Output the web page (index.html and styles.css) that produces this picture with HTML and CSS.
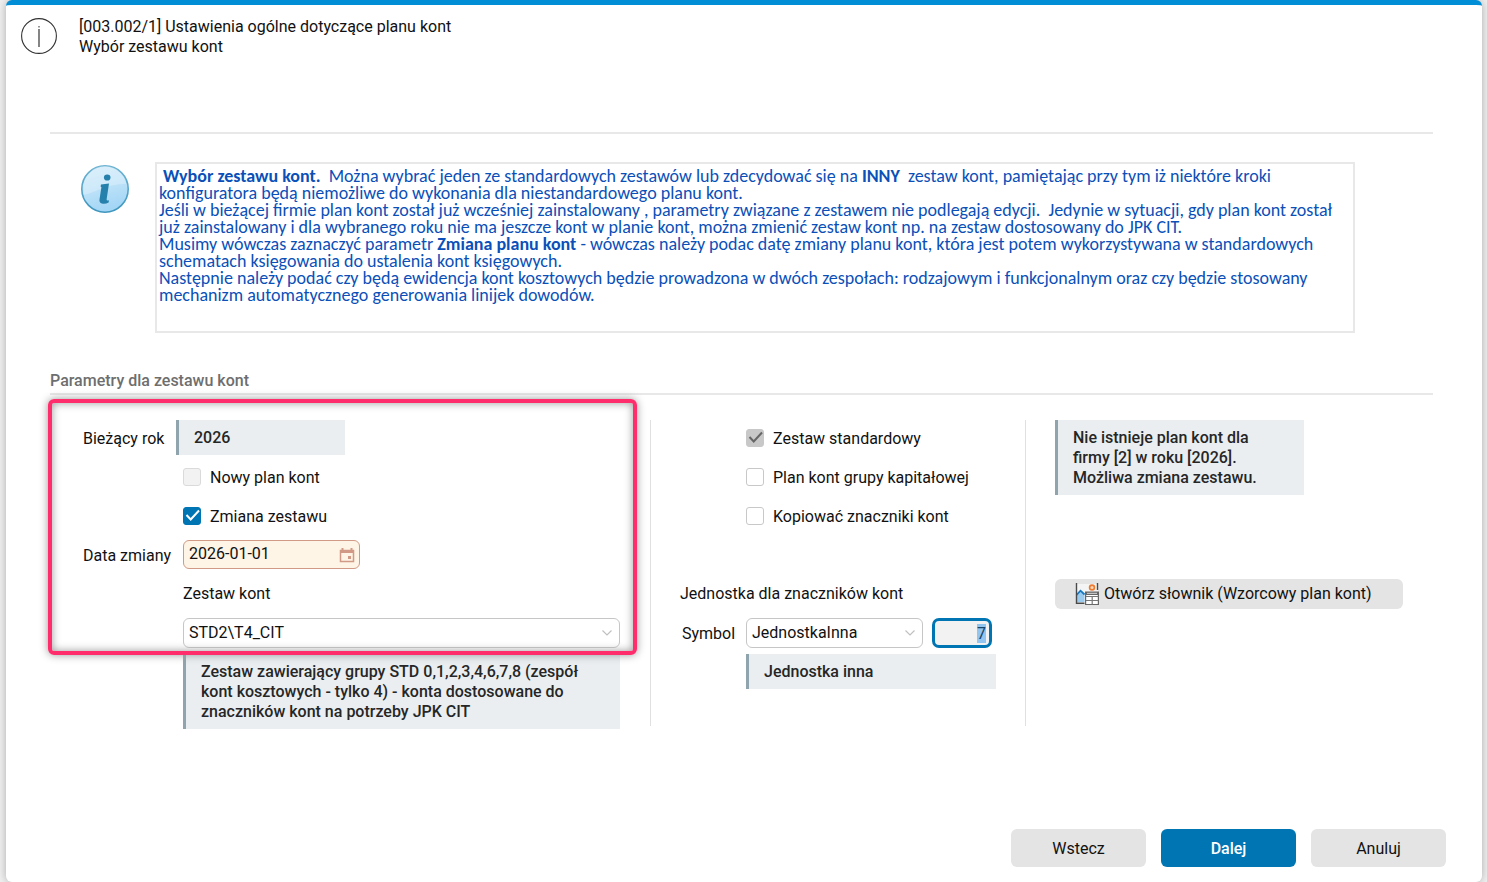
FILE: index.html
```html
<!DOCTYPE html>
<html lang="pl">
<head>
<meta charset="utf-8">
<meta name="viewport" content="width=device-width, initial-scale=1">
<title>Ustawienia ogólne dotyczące planu kont</title>
<link rel="stylesheet" href="styles.css">
</head>
<body>
<form class="dialog">
  <header class="header">
    <svg class="header-icon" viewBox="0 0 36 36" aria-hidden="true">
      <circle cx="18" cy="18" r="17.4" fill="none" stroke="#333" stroke-width="1.1"/>
      <path d="M18 11v18" stroke="#666" stroke-width="1.6"/>
      <path d="M18 8v1.6" stroke="#888" stroke-width="1.8"/>
    </svg>
    <h1 class="title">[003.002/1] Ustawienia ogólne dotyczące planu kont<br>Wybór zestawu kont</h1>
  </header>

  <main class="content">
    <section class="intro">
      <svg class="intro-icon" viewBox="0 0 48 48" aria-hidden="true">
        <defs>
          <linearGradient id="ball" x1="0" y1="0" x2="0.3" y2="1">
            <stop offset="0" stop-color="#d3ecfa"/>
            <stop offset="0.5" stop-color="#bfe3f8"/>
            <stop offset="1" stop-color="#a4d6f6"/>
          </linearGradient>
          <linearGradient id="rim" x1="0" y1="0" x2="0" y2="1">
            <stop offset="0" stop-color="#6db4d3"/>
            <stop offset="1" stop-color="#3d95bd"/>
          </linearGradient>
        </defs>
        <circle cx="24" cy="24" r="23.2" fill="url(#ball)" stroke="url(#rim)" stroke-width="1.6"/>
        <path d="M2.500 30C14 28 27 18 45.400 19A21.800 21.800 0 0 0 2.500 19Z" fill="#fff" opacity="0.25"/>
        <ellipse cx="26.200" cy="12.500" rx="3.300" ry="3.100" fill="#2581ab"/>
        <path d="M20 19.500L28 18.400L25.600 34.500Q25.500 36 28 35.200L27.600 37.400Q24.500 39.400 20.800 38.600Q18 37.800 18.500 34.600L20.400 22.200L19.600 21.600Z" fill="#2581ab"/>
      </svg>
      <div class="intro-text">&nbsp;<b>Wybór zestawu kont.</b>&nbsp; Można wybrać jeden ze standardowych zestawów lub zdecydować się na <b>INNY</b>&nbsp; zestaw kont, pamiętając przy tym iż niektóre kroki<br>konfiguratora będą niemożliwe do wykonania dla niestandardowego planu kont.<br>Jeśli w bieżącej firmie plan kont został już wcześniej zainstalowany , parametry związane z zestawem nie podlegają edycji.&nbsp; Jedynie w sytuacji, gdy plan kont został<br>już zainstalowany i dla wybranego roku nie ma jeszcze kont w planie kont, można zmienić zestaw kont np. na zestaw dostosowany do JPK CIT.<br>Musimy wówczas zaznaczyć parametr <b>Zmiana planu kont</b> - wówczas należy podac datę zmiany planu kont, która jest potem wykorzystywana w standardowych<br>schematach księgowania do ustalenia kont księgowych.<br>Następnie należy podać czy będą ewidencja kont kosztowych będzie prowadzona w dwóch zespołach: rodzajowym i funkcjonalnym oraz czy będzie stosowany<br>mechanizm automatycznego generowania linijek dowodów.</div>
    </section>

    <h2 class="section-title">Parametry dla zestawu kont</h2>

    <div class="columns">
      <section class="column column-set">
        <div class="row row-year">
          <span class="label">Bieżący rok</span>
          <output class="note year">2026</output>
        </div>
        <label class="row check-row"><input type="checkbox" class="check" disabled>Nowy plan kont</label>
        <label class="row check-row"><input type="checkbox" class="check" checked>Zmiana zestawu</label>
        <div class="row">
          <label class="label" for="date">Data zmiany</label>
          <div class="date">
            <input id="date" class="date-input" type="text" value="2026-01-01">
            <button type="button" class="date-button" aria-label="Kalendarz">
              <svg viewBox="0 0 16 16" width="16" height="16" aria-hidden="true">
                <path d="M1.500 3.500h13v11h-13z" fill="none" stroke="#d09a86" stroke-width="1.500"/>
                <path d="M1 3h14v3H1zM2.500 1h2v2h-2zM11.500 1h2v2h-2zM9 9h3v3H9z" fill="#d09a86"/>
              </svg>
            </button>
          </div>
        </div>
        <div class="row indented"><label for="set">Zestaw kont</label></div>
        <div class="row indented">
          <select id="set" class="select set-select"><option>STD2\T4_CIT</option></select>
        </div>
        <p class="note set-note">Zestaw zawierający grupy STD 0,1,2,3,4,6,7,8 (zespół kont kosztowych - tylko 4) - konta dostosowane do znaczników kont na potrzeby JPK CIT</p>
        <div class="highlight"></div>
      </section>

      <section class="column column-unit">
        <label class="row check-row"><input type="checkbox" class="check" checked disabled>Zestaw standardowy</label>
        <label class="row check-row"><input type="checkbox" class="check">Plan kont grupy kapitałowej</label>
        <label class="row check-row"><input type="checkbox" class="check">Kopiować znaczniki kont</label>
        <div class="row"></div>
        <div class="row">Jednostka dla znaczników kont</div>
        <div class="row">
          <label class="label" for="unit">Symbol</label>
          <select id="unit" class="select unit-select"><option>JednostkaInna</option></select>
          <input id="unit-no" class="number" type="text" value="7" aria-label="Numer jednostki">
        </div>
        <p class="note unit-note">Jednostka inna</p>
      </section>

      <section class="column column-info">
        <p class="note info-note">Nie istnieje plan kont dla firmy [2] w roku [2026]. Możliwa zmiana zestawu.</p>
        <div class="row dictionary-row">
          <button type="button" class="dictionary">
            <svg viewBox="0 0 24 24" width="24" height="24" aria-hidden="true">
              <path d="M1 2h22v9h-13v11H1z" fill="#f4f4f4"/>
              <path d="M2 20V11.500L5.500 8L9.500 12V20Z" fill="#9bcbee"/>
              <path d="M1.500 13L5.500 8.700L9.500 12.500" fill="none" stroke="#1878c0" stroke-width="1.800"/>
              <path d="M1.500 1v20.200h8M22.500 1v7" fill="none" stroke="#4a4a4a" stroke-width="1.400"/>
              <circle cx="17" cy="5.500" r="2.400" fill="#f8d9c0" stroke="#ee7d31" stroke-width="1.700"/>
              <path d="M10.600 10.500h12.800v12H10.600z" fill="#fff" stroke="#666" stroke-width="1.200"/>
              <path d="M10 9.500h14v3.500H10z" fill="#666"/>
              <path d="M12 11.300h10" stroke="#ddd" stroke-width="1"/>
              <path d="M11 14.500h12.500M11 18.500h12.500M17.200 14.500v8" stroke="#777" stroke-width="1.200"/>
            </svg>
            Otwórz słownik (Wzorcowy plan kont)
          </button>
        </div>
      </section>
    </div>
  </main>

  <footer class="footer">
    <button type="button" class="button">Wstecz</button>
    <button type="button" class="button button-primary">Dalej</button>
    <button type="button" class="button">Anuluj</button>
  </footer>
</form>
<script src="form.js"></script>
</body>
</html>
```
FILE: styles.css
```css
* {
  box-sizing: border-box;
}

body {
  margin: 0;
  background: #f1f1f1;
  color: #111;
  font: 16px/20px Roboto, sans-serif;
}

input,
select,
button {
  color: inherit;
  font: inherit;
}

p,
h1,
h2 {
  margin: 0;
}

.dialog {
  display: flex;
  flex-direction: column;
  min-height: 100vh;
  margin: 0 5px 0 6px;
  border-top: 5px solid #018ed6;
  border-radius: 6px;
  background: #fff;
  box-shadow: 0 0 10px #aaa;
}

.header {
  display: flex;
  gap: 22px;
  padding: 12px 15px 0;
  min-height: 127px;
}

.header-icon {
  width: 36px;
  height: 36px;
  flex: none;
  margin-top: 1px;
}

.title {
  font-size: 16px;
  font-weight: 400;
}

.content {
  margin: 0 49px 0 44px;
  border-top: 2px solid #e8e8e8;
}

.intro {
  display: flex;
  gap: 26px;
  padding: 28px 78px 0 31px;
}

.intro-icon {
  width: 48px;
  height: 48px;
  flex: none;
  margin-top: 3px;
}

.intro-text {
  flex: 1;
  min-height: 171px;
  padding: 4px 2px;
  border: 2px solid #e8e8e8;
  color: #0a50b8;
  font: 18px/17px Carlito, Calibri, Lato, sans-serif;
}

.section-title {
  margin-top: 38px;
  padding-bottom: 2px;
  border-bottom: 2px solid #e8e8e8;
  color: #6e6e6e;
  font-size: 16px;
  font-weight: 500;
}

.columns {
  display: grid;
  grid-template-columns: 600fr 375fr 408fr;
  align-items: start;
  padding-top: 25px;
}

.column {
  position: relative;
  display: flex;
  flex-direction: column;
  gap: 4px;
  min-height: 306px;
}

.row {
  display: flex;
  align-items: center;
  height: 35px;
}

.column-set {
  padding: 0 30px 0 33px;
}

.column-unit {
  padding: 0 29px;
  border-left: 1px solid #e0e0e0;
}

.column-info {
  padding: 0 29px;
  border-left: 1px solid #e0e0e0;
}

.label {
  flex: none;
  padding-top: 2px;
}

.column-set .label {
  width: 100px;
}

.column-set .row-year .label {
  width: 93px;
}

.column-unit .label {
  width: 66px;
  padding-left: 2px;
}

.column-set .check-row,
.indented,
.set-note {
  margin-left: 100px;
}

.column-unit .check-row,
.unit-note {
  margin-left: 66px;
}

.check-row {
  align-items: flex-start;
  gap: 9px;
  padding-top: 9px;
}

.note {
  padding: 8px 15px 7px;
  border-left: 3px solid #90a4ae;
  background: #eaeef1;
  color: #262626;
  font-weight: 500;
}

.year {
  width: 169px;
}

.info-note {
  width: 249px;
}

.check {
  appearance: none;
  flex: none;
  width: 18px;
  height: 18px;
  margin: 0;
  border: 1px solid #c8c8c8;
  border-radius: 3px;
  background: #fff center / 18px 18px no-repeat;
}

.check:disabled {
  border-color: #dadada;
  background-color: #f2f2f2;
}

.check:checked {
  border-color: #0075b3;
  background-color: #0075b3;
  background-image: url("data:image/svg+xml,%3Csvg xmlns='http://www.w3.org/2000/svg' viewBox='0 0 18 18'%3E%3Cpath d='M3.500 8l4.200 4.500L16 3.500' fill='none' stroke='white' stroke-width='2'/%3E%3C/svg%3E");
}

.check:checked:disabled {
  border-color: #c8c8c8;
  background-color: #c8c8c8;
  background-image: url("data:image/svg+xml,%3Csvg xmlns='http://www.w3.org/2000/svg' viewBox='0 0 18 18'%3E%3Cpath d='M3.500 8l4.200 4.500L16 3.500' fill='none' stroke='%23666' stroke-width='2'/%3E%3C/svg%3E");
}

.date {
  display: flex;
  align-items: center;
  width: 177px;
  height: 29px;
  padding: 0 4px 0 5px;
  border: 1px solid #d09a86;
  border-radius: 6px;
  background: #fff5e6;
}

.date-input {
  flex: 1;
  min-width: 0;
  padding: 0 0 2px;
  border: 0;
  outline: 0;
  background: none;
}

.date-button {
  display: flex;
  padding: 0;
  border: 0;
  background: none;
}

.select {
  appearance: none;
  height: 30px;
  padding: 1px 24px 0 5px;
  border: 1px solid #c6c6c6;
  border-radius: 6px;
  background: #fff url("data:image/svg+xml,%3Csvg xmlns='http://www.w3.org/2000/svg' viewBox='0 0 10 6'%3E%3Cpath d='M.5.5L5 5 9.500.5' fill='none' stroke='%23c0c0c0' stroke-width='1.200'/%3E%3C/svg%3E") right 7px center / 10px 6px no-repeat;
}

.set-select {
  width: 100%;
}

.unit-select {
  width: 177px;
}

.number {
  width: 60px;
  height: 30px;
  margin-left: 9px;
  padding: 1px 3px 0;
  border: 3px solid #0075b3;
  border-radius: 7px;
  outline: 0;
  background: #f2f2f2;
  text-align: right;
}

.number::selection {
  background: #92c5ef;
  color: #164366;
}

/* Frame around the group that the user has to fill in */
.highlight {
  position: absolute;
  top: -21px;
  right: 13px;
  left: -2px;
  height: 256px;
  border: 4px solid #ff2d6b;
  border-radius: 6px;
  box-shadow: 0 0 8px #999, inset 0 0 8px #999;
  pointer-events: none;
}

.dictionary-row {
  margin-top: 77px;
}

.dictionary {
  display: flex;
  align-items: center;
  gap: 5px;
  width: 348px;
  height: 30px;
  padding: 0 20px;
  border: 0;
  border-radius: 6px;
  background: #e4e4e4;
}

.footer {
  display: flex;
  justify-content: flex-end;
  gap: 15px;
  margin-top: auto;
  padding: 20px 36px 15px;
}

.button {
  width: 135px;
  height: 38px;
  padding: 2px 0 0;
  border: 0;
  border-radius: 6px;
  background: #e4e4e4;
}

.button-primary {
  background: #0075b3;
  color: #fff;
  font-weight: 500;
}
```
FILE: form.js
```js
const unitNumber = document.getElementById("unit-no");
unitNumber.focus();
unitNumber.select();
```
